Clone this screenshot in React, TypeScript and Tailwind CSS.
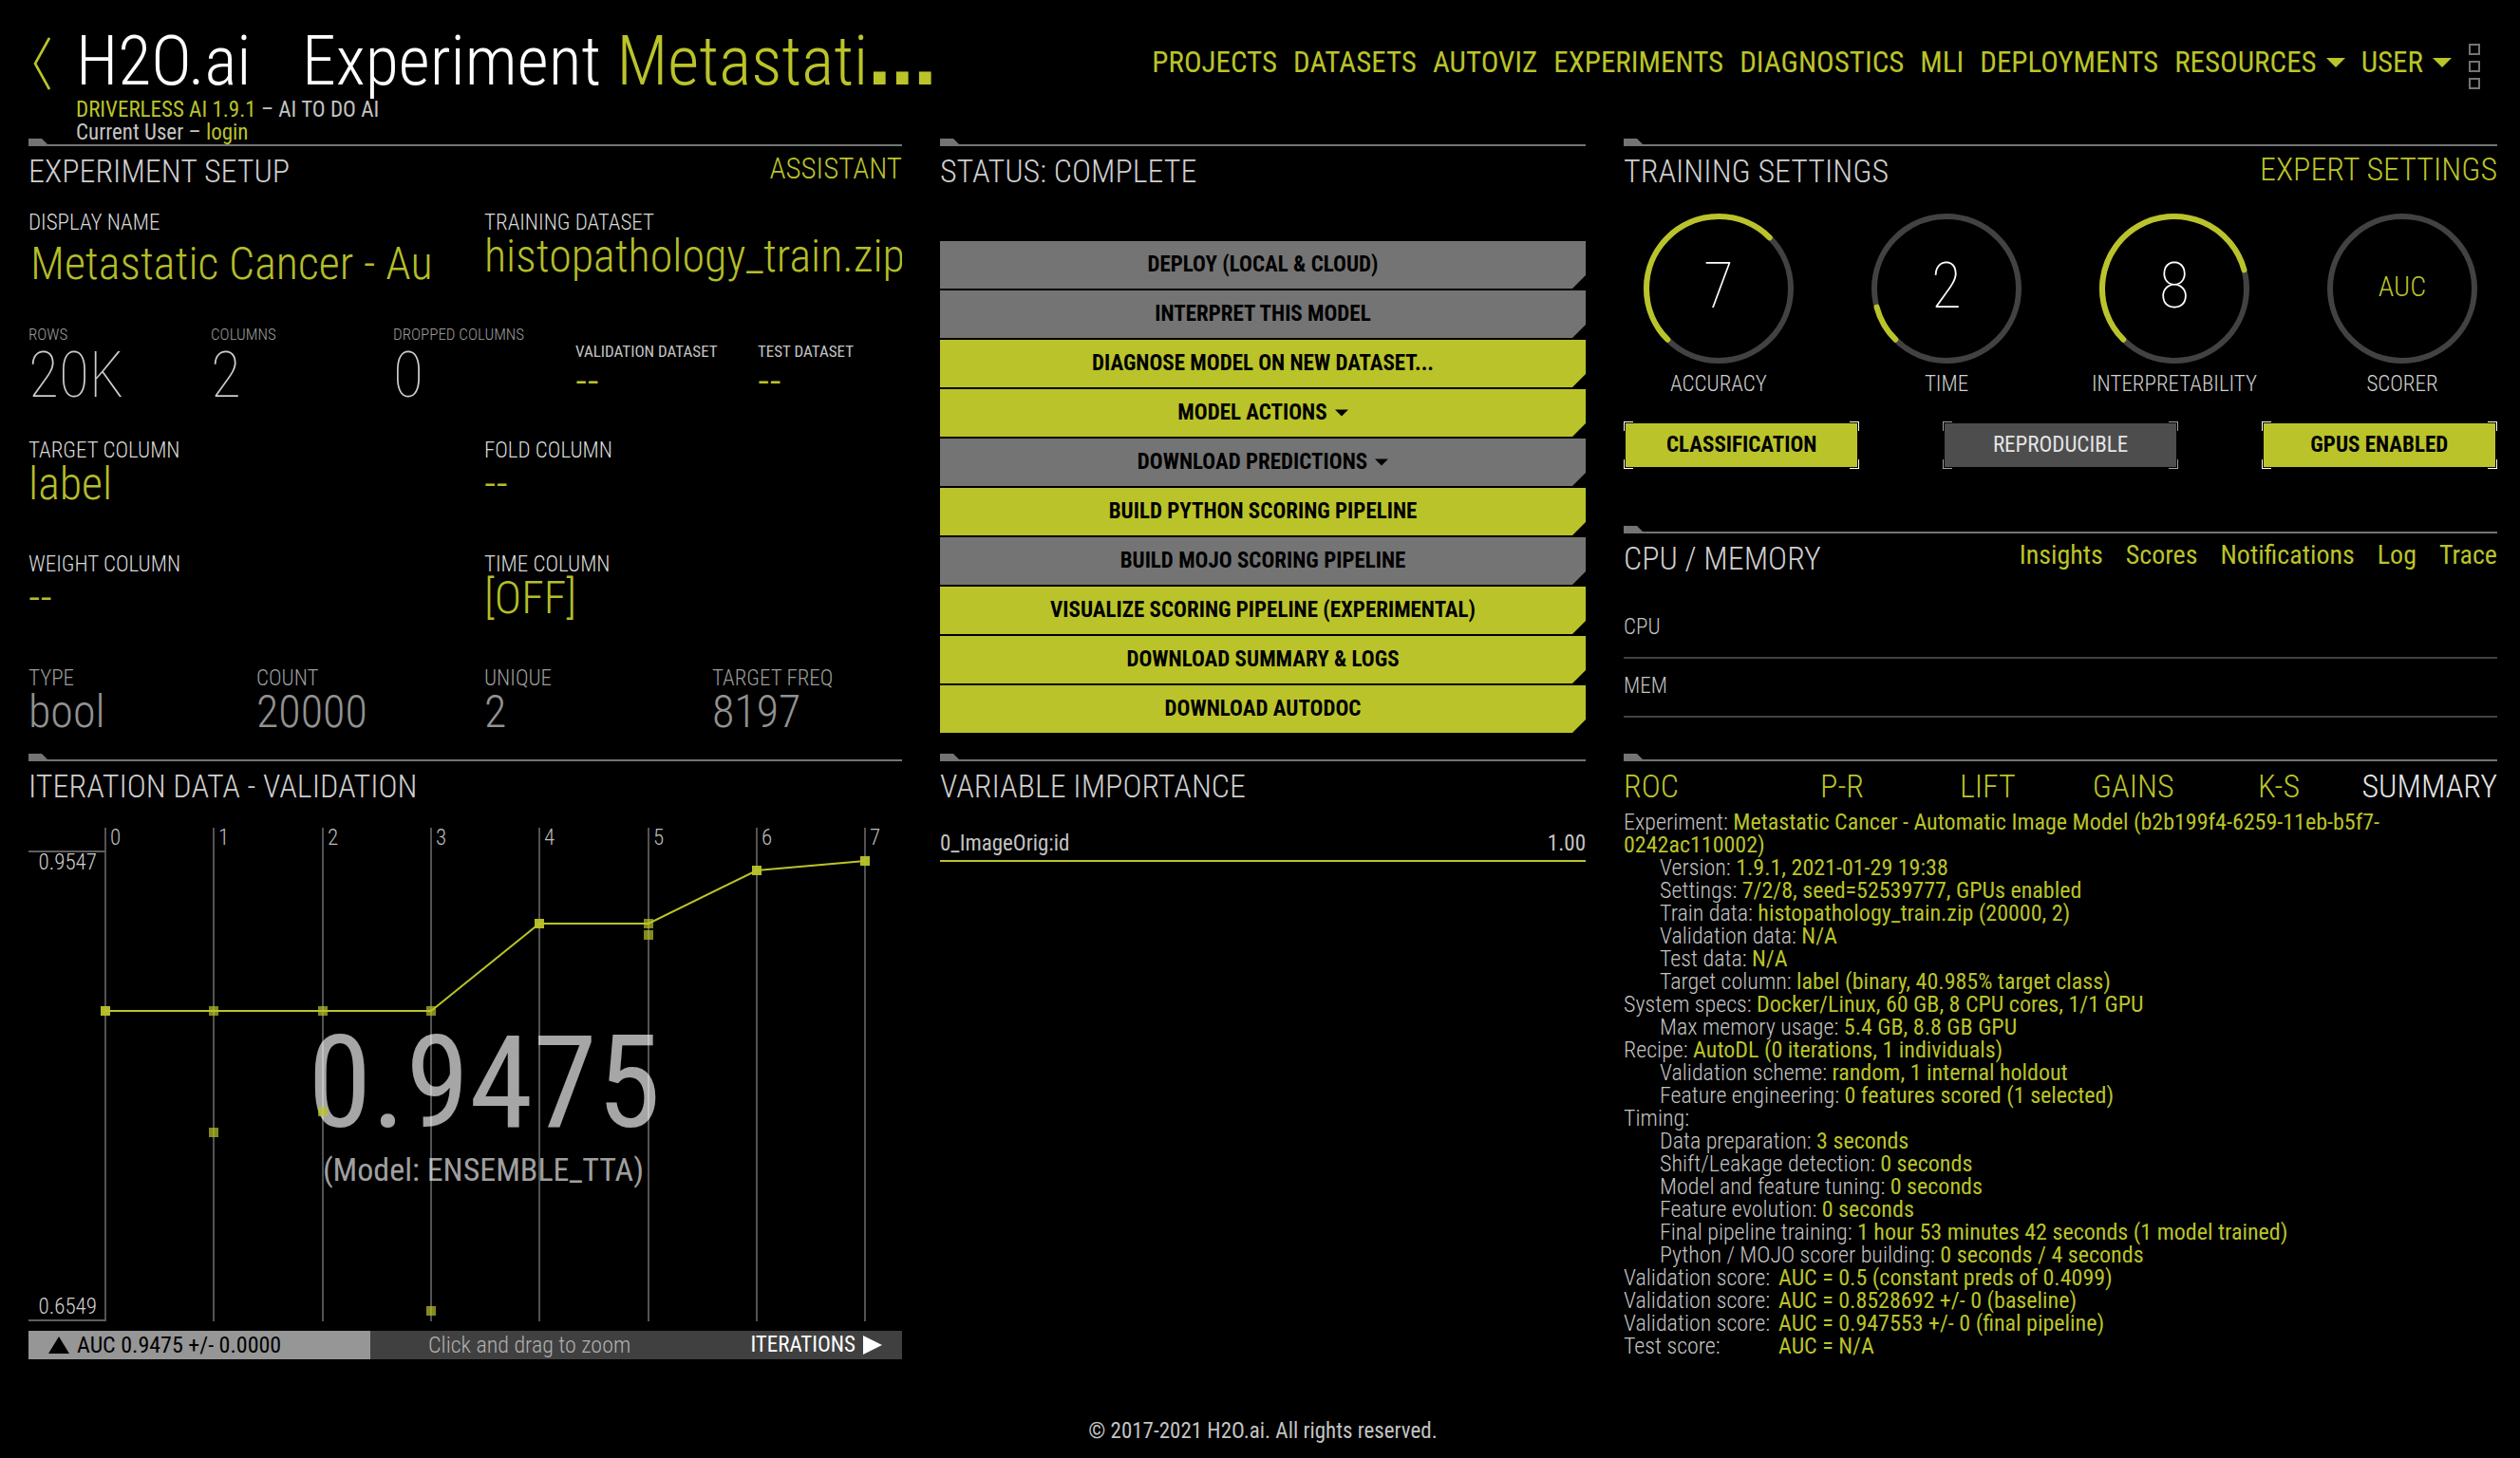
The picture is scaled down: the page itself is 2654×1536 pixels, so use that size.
import type { ReactNode } from "react";

const NAV = [
  { label: "PROJECTS" },
  { label: "DATASETS" },
  { label: "AUTOVIZ" },
  { label: "EXPERIMENTS" },
  { label: "DIAGNOSTICS" },
  { label: "MLI" },
  { label: "DEPLOYMENTS" },
  { label: "RESOURCES", menu: true },
  { label: "USER", menu: true },
];

const ACTIONS = [
  { label: "DEPLOY (LOCAL & CLOUD)", on: false },
  { label: "INTERPRET THIS MODEL", on: false },
  { label: "DIAGNOSE MODEL ON NEW DATASET...", on: true },
  { label: "MODEL ACTIONS", on: true, menu: true },
  { label: "DOWNLOAD PREDICTIONS", on: false, menu: true },
  { label: "BUILD PYTHON SCORING PIPELINE", on: true },
  { label: "BUILD MOJO SCORING PIPELINE", on: false },
  { label: "VISUALIZE SCORING PIPELINE (EXPERIMENTAL)", on: true },
  { label: "DOWNLOAD SUMMARY & LOGS", on: true },
  { label: "DOWNLOAD AUTODOC", on: true },
];

const DIALS = [
  { name: "ACCURACY", value: 7 },
  { name: "TIME", value: 2 },
  { name: "INTERPRETABILITY", value: 8 },
  { name: "SCORER", text: "AUC" },
];

const TOGGLES = [
  { label: "CLASSIFICATION", on: true },
  { label: "REPRODUCIBLE", on: false },
  { label: "GPUS ENABLED", on: true },
];

type Line = { k: string; v?: string; indent?: boolean; fixed?: boolean };
const SUMMARY: Line[] = [
  { k: "Experiment:", v: "Metastatic Cancer - Automatic Image Model (b2b199f4-6259-11eb-b5f7-0242ac110002)" },
  { k: "Version:", v: "1.9.1, 2021-01-29 19:38", indent: true },
  { k: "Settings:", v: "7/2/8, seed=52539777, GPUs enabled", indent: true },
  { k: "Train data:", v: "histopathology_train.zip (20000, 2)", indent: true },
  { k: "Validation data:", v: "N/A", indent: true },
  { k: "Test data:", v: "N/A", indent: true },
  { k: "Target column:", v: "label (binary, 40.985% target class)", indent: true },
  { k: "System specs:", v: "Docker/Linux, 60 GB, 8 CPU cores, 1/1 GPU" },
  { k: "Max memory usage:", v: "5.4 GB, 8.8 GB GPU", indent: true },
  { k: "Recipe:", v: "AutoDL (0 iterations, 1 individuals)" },
  { k: "Validation scheme:", v: "random, 1 internal holdout", indent: true },
  { k: "Feature engineering:", v: "0 features scored (1 selected)", indent: true },
  { k: "Timing:" },
  { k: "Data preparation:", v: "3 seconds", indent: true },
  { k: "Shift/Leakage detection:", v: "0 seconds", indent: true },
  { k: "Model and feature tuning:", v: "0 seconds", indent: true },
  { k: "Feature evolution:", v: "0 seconds", indent: true },
  { k: "Final pipeline training:", v: "1 hour 53 minutes 42 seconds (1 model trained)", indent: true },
  { k: "Python / MOJO scorer building:", v: "0 seconds / 4 seconds", indent: true },
  { k: "Validation score:", v: "AUC = 0.5 (constant preds of 0.4099)", fixed: true },
  { k: "Validation score:", v: "AUC = 0.8528692 +/- 0 (baseline)", fixed: true },
  { k: "Validation score:", v: "AUC = 0.947553 +/- 0 (final pipeline)", fixed: true },
  { k: "Test score:", v: "AUC = N/A", fixed: true },
];

function Caret({ className }: { className: string }) {
  return (
    <svg viewBox="0 0 20 10" className={className} fill="currentColor" aria-hidden="true">
      <path d="M0 0H20L10 10Z" />
    </svg>
  );
}

function Rule() {
  return (
    <div className="h-2 border-b-2 border-[#747474]">
      <div className="h-1.5 w-5 bg-[#747474] [clip-path:polygon(0_0,70%_0,100%_100%,0_100%)]" />
    </div>
  );
}

function Head({ title, children }: { title: string; children?: ReactNode }) {
  return (
    <>
      <Rule />
      <div className="flex h-[46px] items-start justify-between">
        <h2 className="pt-1.5 text-[34px] leading-10 font-light text-[#cfcfcf]">{title}</h2>
        <div className="flex gap-6 pt-1 leading-10 text-[#bac42a]">{children}</div>
      </div>
    </>
  );
}

function Field({ label, value, dim, clip }: { label: string; value: string; dim?: boolean; clip?: boolean }) {
  return (
    <div className={clip ? "min-w-0 overflow-x-clip" : "min-w-0"}>
      <div className={`text-[23px] leading-[26px] font-light ${dim ? "text-[#9c9c9c]" : "text-[#dadada]"}`}>{label}</div>
      <div className={`mt-0.5 text-[48px] leading-10 font-light whitespace-nowrap ${dim ? "text-[#929292]" : "text-[#b4be28]"}`}>
        {value}
      </div>
    </div>
  );
}

function Dial({ name, value, text }: { name: string; value?: number; text?: string }) {
  const polar = (deg: number) => {
    const r = (deg * Math.PI) / 180;
    return `${79 + 76 * Math.cos(r)} ${79 + 76 * Math.sin(r)}`;
  };
  const sweep = value ? (value - 1) * 30 : 0;
  return (
    <div className="flex flex-col items-center">
      <button aria-label={name} className="relative grid size-[158px] place-items-center pb-1">
        <svg viewBox="0 0 158 158" className="absolute inset-0 size-full" fill="none" strokeWidth="6" strokeLinecap="round">
          <circle cx="79" cy="79" r="76" stroke="#424242" />
          {value && <path d={`M${polar(135)}A76 76 0 ${sweep > 180 ? 1 : 0} 1 ${polar(135 + sweep)}`} stroke="#bac42a" />}
        </svg>
        {value ? (
          <span className="text-[66px] leading-none font-thin text-white">{value}</span>
        ) : (
          <span className="text-[30px] leading-none font-light text-[#bac42a]">{text}</span>
        )}
      </button>
      <div className="mt-[9px] text-[23px] leading-[26px] font-light text-[#d0d0d0]">{name}</div>
    </div>
  );
}

function Toggle({ label, on }: { label: string; on: boolean }) {
  const edge = on ? "border-white" : "border-[#a0a0a0]";
  return (
    <button aria-pressed={on} className="relative w-[27%] p-0.5">
      <span className={`absolute top-0 left-0 size-2.5 border-t border-l ${edge}`} />
      <span className={`absolute top-0 right-0 size-2.5 border-t border-r ${edge}`} />
      <span className={`absolute bottom-0 left-0 size-2.5 border-b border-l ${edge}`} />
      <span className={`absolute right-0 bottom-0 size-2.5 border-r border-b ${edge}`} />
      <span
        className={
          on
            ? "relative block bg-[#bac42a] py-[11px] text-[23px] leading-6 font-bold text-black"
            : "relative block bg-[#4d4d4d] py-[11px] text-[23px] leading-6 text-[#e4e4e4]"
        }
      >
        {label}
      </span>
    </button>
  );
}

const GRID_X = [81, 195, 310, 424, 538, 653, 767, 881];
const BEST = [193, 193, 193, 193, 101, 101, 45, 35];
const MARKS: [number, number, number][] = [
  [0, 193, 0.95],
  [1, 193, 0.7],
  [2, 193, 0.7],
  [3, 193, 0.7],
  [4, 101, 0.95],
  [5, 101, 0.7],
  [5, 113, 0.7],
  [6, 45, 0.95],
  [7, 35, 0.95],
  [1, 321, 0.7],
  [2, 299, 0.7],
  [3, 509, 0.7],
];

function IterationChart() {
  return (
    <svg viewBox="0 0 920 520" className="mt-6 block w-full" role="img" aria-label="Validation score by iteration">
      {GRID_X.map((x, i) => (
        <g key={x}>
          <line x1={x} x2={x} y1="0" y2="520" stroke="#686868" strokeWidth="1.6" />
          <text x={x + 5} y="18" fontSize="23" fontWeight="300" fill="#bdbdbd">
            {i}
          </text>
        </g>
      ))}
      <path d="M0 25H81M0 519H81" stroke="#5e5e5e" strokeWidth="2" />
      <text x="72" y="44" fontSize="23" fontWeight="300" fill="#d0d0d0" textAnchor="end">
        0.9547
      </text>
      <text x="72" y="512" fontSize="23" fontWeight="300" fill="#d0d0d0" textAnchor="end">
        0.6549
      </text>
      <polyline points={BEST.map((y, i) => `${GRID_X[i]},${y}`).join(" ")} fill="none" stroke="#bac42a" strokeWidth="2" />
      <g fill="#ffffff" fillOpacity="0.65" textAnchor="middle">
        <text x="480" y="315" fontSize="136">
          0.9475
        </text>
        <text x="479" y="372" fontSize="34">
          (Model: ENSEMBLE_TTA)
        </text>
      </g>
      {MARKS.map(([i, y, o]) => (
        <rect key={`${i}-${y}`} x={GRID_X[i] - 5} y={y - 5} width="10" height="10" fill="#bac42a" opacity={o} />
      ))}
    </svg>
  );
}

export default function App() {
  return (
    <div className="min-h-screen bg-black pr-6 pl-[30px] font-['Roboto_Condensed','Roboto',sans-serif] text-[#c4c4c4]">
      <header className="-mb-1.5 flex items-start justify-between pt-[34px]">
        <div className="flex pl-[5px]">
          <a href="#back" aria-label="Back" className="pt-[5px] text-[#bac42a]">
            <svg viewBox="0 0 18 56" className="h-14 w-[18px]" fill="none" stroke="currentColor" strokeWidth="2.6">
              <path d="M17 1L2 28L17 55" />
            </svg>
          </a>
          <div className="pl-[27px]">
            <h1 className="flex h-16 text-[72px] leading-[62px] font-light text-white">
              <span className="w-[238px]">H2O.ai</span>
              <span className="whitespace-nowrap">
                Experiment{" "}
                <span className="text-[#bac42a]">
                  Metastati<span className="font-['DejaVu_Sans',sans-serif] leading-[0px] font-bold">…</span>
                </span>
              </span>
            </h1>
            <p className="mt-1.5 text-[23px] leading-6">
              <a href="#version" className="text-[#bac42a]">DRIVERLESS AI 1.9.1</a> – AI TO DO AI
            </p>
            <p className="text-[23px] leading-6">
              Current User – <a href="#login" className="text-[#bac42a]">login</a>
            </p>
          </div>
        </div>
        <div className="flex items-start gap-[18px] pt-3 pr-[18px]">
          <nav className="flex gap-[17px] text-[31px] leading-10 text-[#bac42a]">
            {NAV.map((n) => (
              <a key={n.label} href={`#${n.label.toLowerCase()}`} className="flex items-center gap-2.5">
                {n.label}
                {n.menu && <Caret className="h-2.5 w-5" />}
              </a>
            ))}
          </nav>
          <button aria-label="More" className="flex flex-col gap-1.5">
            <span className="size-3 border-2 border-[#747474]" />
            <span className="size-3 border-2 border-[#747474]" />
            <span className="size-3 border-2 border-[#747474]" />
          </button>
        </div>
      </header>

      <main className="grid grid-cols-[23fr_17fr_23fr] gap-x-10">
        <section className="min-w-0">
          <Head title="EXPERIMENT SETUP">
            <button className="text-[31px] leading-10 font-light">ASSISTANT</button>
          </Head>
          <div className="mt-[22px] grid auto-rows-[120px] grid-cols-2 gap-x-10">
            <div className="min-w-0">
              <label htmlFor="display-name" className="block text-[23px] leading-[26px] font-light text-[#dadada]">
                DISPLAY NAME
              </label>
              <input
                id="display-name"
                defaultValue="Metastatic Cancer - Au"
                className="h-[60px] w-full bg-transparent px-0.5 text-[48px] font-light text-[#b4be28] outline-none"
              />
            </div>
            <Field clip label="TRAINING DATASET" value="histopathology_train.zip" />
            <div className="col-span-2 grid grid-cols-5 gap-x-10">
              {[
                ["ROWS", "20K"],
                ["COLUMNS", "2"],
                ["DROPPED COLUMNS", "0"],
              ].map(([k, v]) => (
                <div key={k} className="whitespace-nowrap">
                  <div className="text-[17px] leading-5 font-light text-[#9c9c9c]">{k}</div>
                  <div className="mt-1 text-[66px] leading-[60px] font-thin text-[#cccccc]">{v}</div>
                </div>
              ))}
              {["VALIDATION DATASET", "TEST DATASET"].map((k) => (
                <div key={k} className="pt-[18px] whitespace-nowrap">
                  <div className="text-[17px] leading-5 text-[#c4c4c4]">{k}</div>
                  <div className="mt-1 text-[48px] leading-9 font-light text-[#bac42a]">--</div>
                </div>
              ))}
            </div>
            <Field label="TARGET COLUMN" value="label" />
            <Field label="FOLD COLUMN" value="--" />
            <Field label="WEIGHT COLUMN" value="--" />
            <Field label="TIME COLUMN" value="[OFF]" />
          </div>
          <div className="grid h-[92px] grid-cols-4 gap-x-10">
            <Field dim label="TYPE" value="bool" />
            <Field dim label="COUNT" value="20000" />
            <Field dim label="UNIQUE" value="2" />
            <Field dim label="TARGET FREQ" value="8197" />
          </div>
        </section>

        <section>
          <Head title="STATUS: COMPLETE" />
          <div className="mt-[54px] flex flex-col gap-0.5">
            {ACTIONS.map((a) => (
              <button
                key={a.label}
                className={`flex h-[50px] items-center justify-center gap-2 text-[23px] font-bold text-black [clip-path:polygon(0_0,100%_0,100%_calc(100%_-_14px),calc(100%_-_14px)_100%,0_100%)] ${a.on ? "bg-[#bac42a]" : "bg-[#747474]"}`}
              >
                {a.label}
                {a.menu && <Caret className="h-2 w-3.5" />}
              </button>
            ))}
          </div>
        </section>

        <div>
          <section>
            <Head title="TRAINING SETTINGS">
              <button className="text-[34px] leading-10 font-light">EXPERT SETTINGS</button>
            </Head>
            <div className="mt-[25px] grid grid-cols-4 gap-x-10">
              {DIALS.map((d) => (
                <Dial key={d.name} {...d} />
              ))}
            </div>
            <div className="mt-[26px] mb-[60px] flex justify-between">
              {TOGGLES.map((t) => (
                <Toggle key={t.label} {...t} />
              ))}
            </div>
          </section>
          <section>
            <Head title="CPU / MEMORY">
              {["Insights", "Scores", "Notifications", "Log", "Trace"].map((l) => (
                <button key={l} className="text-[28px] leading-[38px]">{l}</button>
              ))}
            </Head>
            <div className="border-b-2 border-[#424242] pt-10 pb-[18px] text-[23px] leading-[26px] font-light">CPU</div>
            <div className="border-b-2 border-[#424242] pt-4 pb-[18px] text-[23px] leading-[26px] font-light">MEM</div>
          </section>
        </div>

        <section>
          <Head title="ITERATION DATA - VALIDATION" />
          <IterationChart />
          <div className="mt-2.5 flex h-[30px] items-center bg-[#404040] text-[24px]">
            <div className="flex h-full w-[360px] items-center gap-2 bg-[#969696] pl-[21px] text-black">
              <svg viewBox="0 0 22 18" className="h-[18px] w-[22px]" aria-hidden="true">
                <path d="M11 0L22 18H0Z" />
              </svg>
              AUC 0.9475 +/- 0.0000
            </div>
            <div className="flex-1 pl-[61px] font-light text-[#b0b0b0]">Click and drag to zoom</div>
            <button className="flex items-center gap-2 pr-[21px] text-[23px] text-white">
              ITERATIONS
              <svg viewBox="0 0 20 20" className="size-5" fill="currentColor" aria-hidden="true">
                <path d="M0 0L20 10L0 20Z" />
              </svg>
            </button>
          </div>
        </section>

        <section>
          <Head title="VARIABLE IMPORTANCE" />
          <div className="flex justify-between border-b-2 border-[#bac42a] pt-7 pb-1 text-[23px] leading-[26px]">
            <span>0_ImageOrig:id</span>
            <span>1.00</span>
          </div>
        </section>

        <section>
          <Rule />
          <div className="grid grid-cols-6 pt-1.5 text-[34px] leading-10 font-light text-[#bac42a]">
            <button className="text-left">ROC</button>
            <button>P-R</button>
            <button>LIFT</button>
            <button>GAINS</button>
            <button>K-S</button>
            <button className="text-right text-[#e6e6e6]">SUMMARY</button>
          </div>
          <div className="mt-1.5 text-[24px] leading-6 font-light">
            {SUMMARY.map((l, i) => (
              <p key={i} className={l.indent ? "pl-[38px]" : ""}>
                <span className={l.fixed ? "inline-block w-[163px]" : ""}>{l.k}</span>
                {l.fixed ? "" : " "}
                <span className="font-normal text-[#bac42a]">{l.v}</span>
              </p>
            ))}
          </div>
        </section>
      </main>
      <footer className="mt-16 pb-4 text-center text-[23px] leading-6">© 2017-2021 H2O.ai. All rights reserved.</footer>
    </div>
  );
}
